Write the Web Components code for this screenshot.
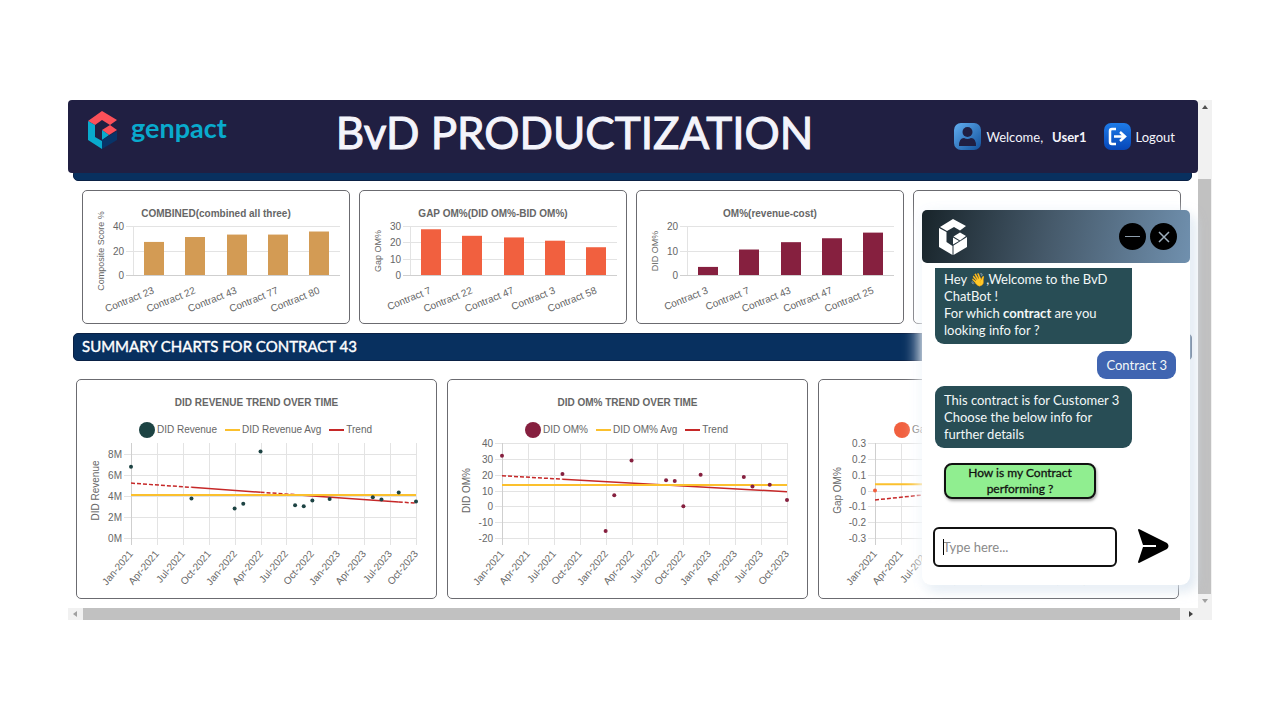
<!DOCTYPE html>
<html lang="en">
<head>
<meta charset="utf-8">
<meta name="viewport" content="width=device-width, initial-scale=1">
<title>BvD Productization</title>
<style>
  body { margin: 0; background: #fff; font-family: Lato, Calibri, sans-serif; color: #111; }
  bvd-dashboard { padding: 100px 68px; }
</style>
</head>
<body>
<bvd-dashboard></bvd-dashboard>
<script>
const define = (name, markup, init) => {
  const tpl = document.createElement('template');
  tpl.innerHTML = markup;
  customElements.define(name, class extends HTMLElement {
    constructor() {
      super();
      this.attachShadow({ mode: 'open' }).append(tpl.content.cloneNode(true));
    }
    connectedCallback() { if (init) init.call(this, this.shadowRoot); }
  });
};

const line = (x1, y1, x2, y2, extra) =>
  `<line x1="${x1}" y1="${y1}" x2="${x2}" y2="${y2}" ${extra}/>`;
const chartCss = `
  :host { display: block; border: 1px solid #6b6b70; border-radius: 5px; background: #fff;
    font-family: "Liberation Sans", Arial, sans-serif; font-size: 10px; color: #666; }
  h3 { margin: 0; padding-top: 17px; min-height: 11px; font-size: 10px; line-height: 11px; text-align: center; }
  svg { display: block; width: 100%; height: auto; overflow: visible; }
  text { fill: #666; font-size: 10px; }
  .small { font-size: 9px; }
  .grid { stroke: #e3e3e3; }
  .axis { stroke: #cfcfcf; }`;

define('bar-chart', `<style>${chartCss}</style>
  <h3><slot></slot></h3><div id="plot"></div>`, function (root) {
  const { axis, max, step, color, bars } = JSON.parse(this.getAttribute('data'));
  const L = 50, R = 257, T = 7, B = 56, pitch = (R - L) / bars.length;
  const y = v => B - v / max * (B - T);
  let s = '';
  for (let v = 0; v <= max; v += step) {
    const yy = Math.round(y(v)) + 0.5;
    s += line(L - 7, yy, R, yy, `class="${v ? 'grid' : 'axis'}"`) +
      `<text x="${L - 9}" y="${yy + 3}" text-anchor="end">${v}</text>`;
  }
  s += line(L + 0.5, T, L + 0.5, B, 'class="grid"');
  bars.forEach(([name, v], i) => {
    const cx = L + pitch * (i + 0.5);
    s += `<rect x="${Math.round(cx - 10)}" y="${y(v)}" width="20" height="${B - y(v)}" fill="${color}"/>` +
      `<text transform="translate(${cx + 1} 74) rotate(-22)" text-anchor="end">${name}</text>`;
  });
  s += `<text class="small" transform="translate(21 32) rotate(-90)" text-anchor="middle">${axis}</text>`;
  root.getElementById('plot').innerHTML = `<svg viewBox="0 0 266 104">${s}</svg>`;
});

define('trend-chart', `<style>${chartCss}
  .legend { display: flex; justify-content: center; gap: 8px; margin-top: 14px; padding-right: 2px; line-height: 16px; white-space: nowrap; }
  .legend.single { justify-content: flex-start; padding-left: 75px; }
  .legend span { display: flex; align-items: center; gap: 2px; font-size: 10px; }
  .dot { width: 16px; height: 16px; border-radius: 50%; }
  .bar { width: 15px; height: 2px; }
  </style>
  <h3><slot></slot></h3><div class="legend"></div><div id="plot"></div>`, function (root) {
  const d = JSON.parse(this.getAttribute('data'));
  const L = d.left, R = L + 285, T = 5, B = 100;
  const y = v => B - (v - d.min) / (d.max - d.min) * (B - T);
  const x = m => L + m / 33 * (R - L);
  const legend = root.querySelector('.legend');
  legend.classList.toggle('single', !!d.single);
  legend.innerHTML = `<span><i class="dot" style="background:${d.color}"></i>${d.series}</span>` +
    (d.single ? '' :
    `<span><i class="bar" style="background:#fbc02d"></i>${d.series} Avg</span>` +
    `<span><i class="bar" style="background:#c62828"></i>Trend</span>`);
  let s = '';
  d.ticks.forEach(([v, label]) => {
    const yy = Math.round(y(v)) + 0.5;
    s += line(L - 7, yy, R, yy, 'class="grid"') +
      `<text x="${L - 9}" y="${yy + 3}" text-anchor="end">${label}</text>`;
  });
  ['Jan-2021', 'Apr-2021', 'Jul-2021', 'Oct-2021', 'Jan-2022', 'Apr-2022', 'Jul-2022', 'Oct-2022',
   'Jan-2023', 'Apr-2023', 'Jul-2023', 'Oct-2023'].forEach((label, i) => {
    const xx = Math.round(x(i * 3)) + 0.5;
    s += line(xx, T, xx, B + 7, `class="${i ? 'grid' : 'axis'}"`) +
      `<text transform="translate(${xx + 2} 116) rotate(-50)" text-anchor="end">${label}</text>`;
  });
  const [a, b] = d.trend, t = m => y(a + (b - a) * m / 33);
  d.parts.forEach(([from, to, dashed]) => {
    s += line(x(from), t(from), x(to), t(to),
      `stroke="#c62828" stroke-width="1.5" ${dashed ? 'stroke-dasharray="4 2"' : ''}`);
  });
  s += line(L, y(d.avg), R, y(d.avg), 'stroke="#fbc02d" stroke-width="2"');
  d.points.forEach(([m, v]) => { s += `<circle cx="${x(m)}" cy="${y(v)}" r="2" fill="${d.color}"/>`; });
  s += `<text transform="translate(22 ${(T + B) / 2}) rotate(-90)" text-anchor="middle">${d.axis}</text>`;
  root.getElementById('plot').innerHTML = `<svg viewBox="0 0 359 160">${s}</svg>`;
});

define('app-header', `<style>
  :host { display: grid; grid-template-columns: auto 1fr auto; height: 73px; box-sizing: border-box; padding: 0 23px 0 19px;
    background: #201f42; color: #f4f4fb; border-radius: 4px; position: relative; z-index: 1; }
  .logo { display: flex; align-items: flex-start; gap: 12px; padding-top: 10px; }
  .name { color: #09aacd; font-size: 27px; line-height: 36px; font-weight: 700; }
  h1 { margin: 0; padding-right: 32px; text-align: center; font-size: 44px; line-height: 65px; font-weight: 400;
    white-space: nowrap; -webkit-text-stroke: 1px #f4f4fb; }
  nav { display: flex; justify-content: flex-end; align-items: center; font-size: 13px; white-space: nowrap; }
  nav svg { margin-right: 5px; }
  b { margin: 0 17px 0 9px; }
  a { display: flex; align-items: center; color: inherit; text-decoration: none; }
  </style>
  <div class="logo">
    <svg width="32" height="40" viewBox="0 0 32 40">
      <path d="M1 11 15 1 30 10 23 15 15 10 8 15Z" fill="#fb5059"/>
      <path d="M1 11 8 15V27L15 31V39L1 30Z" fill="#09aacd"/>
      <path d="M15 20 23 15 30 20 22 25Z" fill="#fb5059"/>
      <path d="M15 20 22 25 15 30Z" fill="#09aacd"/>
      <path d="M15 30 30 21V30L15 39Z" fill="#083468"/>
    </svg>
    <span class="name">genpact</span>
  </div>
  <h1>BvD PRODUCTIZATION</h1>
  <nav>
    <svg width="27" height="27" viewBox="0 0 27 27">
      <defs><linearGradient id="u" x2="1" y2="1"><stop stop-color="#62aef0"/><stop offset="1" stop-color="#12519c"/></linearGradient></defs>
      <rect width="27" height="27" rx="7" fill="url(#u)"/>
      <circle cx="13.500" cy="9" r="5" fill="#201f42"/><path d="M5 23q0-8 5-8 3.500 2 7 0 5 0 5 8z" fill="#201f42"/>
    </svg>
    <span>Welcome,</span><b>User1</b>
    <a href="#logout"><svg width="27" height="27" viewBox="0 0 27 27">
      <defs><linearGradient id="o" x2="0" y2="1"><stop stop-color="#1e7be8"/><stop offset="1" stop-color="#0646b8"/></linearGradient></defs>
      <rect width="27" height="27" rx="7" fill="url(#o)"/>
      <path d="M12 6H8Q6 6 6 8V19Q6 21 8 21H12M10 13.500H20M16 9l5 4.500L16 18" fill="none" stroke="#fff" stroke-width="2.500"/>
    </svg>Logout</a>
  </nav>`);

define('section-band', `<style>
  :host { display: block; margin: 0 6px 0 5px; background: #08305f; border: 1px solid #0a2145; border-radius: 5px;
    color: #fff; box-sizing: border-box; }
  h2 { margin: 0; padding: 0 0 2px 8px; font-size: 15px; line-height: 24px; font-weight: 400; -webkit-text-stroke: 0.4px #fff; }
  </style><h2><slot></slot></h2>`);

define('scroll-bar', `<style>
  :host { display: flex; background: #f1f1f1; }
  :host([vertical]) { flex-direction: column; }
  .gap { flex: none; }
  .thumb { flex: 1; background: #c1c1c1; }
  :host([vertical]) .thumb { margin-right: 1px; }
  :host([vertical]) .gap { height: 65px; }
  </style><slot name="start"></slot><div class="gap"></div><div class="thumb"></div><slot name="end"></slot>`);

define('chat-bubble', `<style>
  :host { display: block; box-sizing: border-box; width: 197px; padding: 6px 9px 5px; border-radius: 9px;
    background: #284d55; color: #f3f8f8; font-size: 13px; line-height: 17px; }
  :host([mine]) { width: auto; align-self: flex-end; background: #4065b1; }
  :host([clipped]) { padding-top: 3px; border-radius: 0 0 9px 9px; }
  </style><slot></slot>`);

define('chat-window', `<style>
  :host { display: block; box-sizing: border-box; background: #fff; border-radius: 9px; padding-bottom: 18px;
    box-shadow: -3px 0 16px #f7fafd, 5px 5px 12px rgb(190 208 226 / 0.6); }
  header { display: flex; align-items: center; gap: 4px; height: 53px; box-sizing: border-box; padding: 0 13px 0 16px;
    border-radius: 5px; background: linear-gradient(100deg, #18242a, #465a6b 48%, #7090ae); }
  header button { width: 27px; height: 27px; padding: 0; border: 0; border-radius: 50%; background: #000; display: grid; place-items: center; }
  header .mark { margin-right: auto; }
  .log { display: flex; flex-direction: column; align-items: flex-start; gap: 7px; padding: 5px 14px 0 13px; }
  .choice { margin: 8px 0 0 9px; width: 152px; height: 36px; padding: 0 16px; border: 2px solid #111; border-radius: 8px;
    background: #90ee90; color: #111; font: 400 12px/16px Lato, sans-serif; -webkit-text-stroke: 0.3px #111; box-shadow: 1px 2px 3px #aaa; }
  form { display: flex; align-items: center; gap: 20px; margin: 28px 0 0 11px; }
  .field { position: relative; }
  .caret { position: absolute; left: 10px; top: 12px; width: 1px; height: 16px; background: #000; }
  input { display: block; width: 184px; height: 40px; box-sizing: border-box; padding: 0 8px; border: 2px solid #111; border-radius: 6px;
    font: 400 13px Lato, sans-serif; outline: 0; }
  input::placeholder { color: #8a8a8a; }
  .send { padding: 0; border: 0; background: none; height: 36px; }
  </style>
  <header>
    <svg class="mark" width="30" height="38" viewBox="0 0 30 38" fill="#fff">
      <path d="M2 9 15 1 28 8 22 12.500 16 9 9 13Z"/><path d="M1 10 8.500 14V24L14.500 28V37L1 29Z"/>
      <path d="M15.500 18.500 22 14.500 28 18 22 22.500Z"/><path d="M15 19.500 21 23 15 26.500Z"/><path d="M15.500 27.500 29 19V29L15.500 37Z"/>
    </svg>
    <button aria-label="Minimize"><svg width="15" height="15" stroke="#8d9dab"><path d="M0 7.500H15"/></svg></button>
    <button aria-label="Close"><svg width="12" height="12" stroke="#9fb0be" stroke-width="1.500"><path d="M1 1 11 11M11 1 1 11"/></svg></button>
  </header>
  <div class="log">
    <chat-bubble clipped>Hey 👋,Welcome to the BvD ChatBot !<br>For which <b>contract</b><span> are you</span><br>looking info for ?</chat-bubble>
    <chat-bubble mine>Contract 3</chat-bubble>
    <chat-bubble>This contract is for Customer 3 Choose the below info for further details</chat-bubble>
    <button class="choice">How is my Contract performing ?</button>
  </div>
  <form>
    <div class="field"><input type="text" placeholder="Type here..." aria-label="Message"><span class="caret"></span></div>
    <button class="send" type="button" aria-label="Send"><svg width="32" height="34" viewBox="0 0 32 34">
      <path d="M1 1Q1 0 2 0L30 14Q33 17 30 20L2 34Q1 34 1 33L6 18H19V16H6Z" fill="#000"/></svg></button>
  </form>`);

const bar = (title, data) => `<bar-chart data='${JSON.stringify(data)}'>${title}</bar-chart>`;
const trend = (title, data) => `<trend-chart data='${JSON.stringify(data)}'>${title}</trend-chart>`;

define('bvd-dashboard', `<style>
  :host { display: block; }
  .frame { position: relative; display: grid; grid-template-columns: minmax(0, 1fr) 14px; grid-template-rows: auto 12px; }
  .strip { height: 12px; margin-top: -4px; }
  .bars { display: grid; grid-template-columns: repeat(4, minmax(0, 1fr)); gap: 9px; padding: 9px 17px 9px 14px; }
  .trends { display: grid; grid-template-columns: repeat(3, minmax(0, 1fr)); gap: 10px; padding: 18px 19px 9px 8px; }
  chat-window { position: absolute; top: 110px; right: 22px; width: 268px; z-index: 2; }
  .bottom { grid-column: 1 / -1; }
  .blank { border: 1px solid #6b6b70; border-radius: 5px; }
  svg { display: block; flex: none; }
  </style>
  <div class="frame">
    <main>
      <app-header></app-header>
      <section-band class="strip"></section-band>
      <div class="bars">
        ${bar('COMBINED(combined all three)', { axis: 'Composite Score %', max: 40, step: 20, color: '#d39b54',
          bars: [['Contract 23', 27], ['Contract 22', 31], ['Contract 43', 33], ['Contract 77', 33], ['Contract 80', 35.5]] })}
        ${bar('GAP OM%(DID OM%-BID OM%)', { axis: 'Gap OM%', max: 30, step: 10, color: '#f1603f',
          bars: [['Contract 7', 28], ['Contract 22', 24], ['Contract 47', 23], ['Contract 3', 21], ['Contract 58', 17]] })}
        ${bar('OM%(revenue-cost)', { axis: 'DID OM%', max: 20, step: 10, color: '#86203f',
          bars: [['Contract 3', 3.3], ['Contract 7', 10.4], ['Contract 43', 13.4], ['Contract 47', 15], ['Contract 25', 17.3]] })}
        <div class="blank"></div>
      </div>
      <section-band>SUMMARY CHARTS FOR CONTRACT 43</section-band>
      <div class="trends">
        ${trend('DID REVENUE TREND OVER TIME', { axis: 'DID Revenue', series: 'DID Revenue', color: '#1d4343', left: 54, min: 0, max: 9,
          ticks: [[0, '0M'], [2, '2M'], [4, '4M'], [6, '6M'], [8, '8M']], avg: 4.08, trend: [5.2, 3.3],
          parts: [[0, 7, 1], [7, 15, 0], [15, 19, 1], [19, 31, 0], [31, 33, 1]],
          points: [[0, 6.75], [7, 3.75], [12, 2.8], [13, 3.25], [15, 8.2], [19, 3.1], [20, 3], [21, 3.55], [23, 3.7], [28, 3.85], [29, 3.65], [31, 4.3], [33, 3.45]] })}
        ${trend('DID OM% TREND OVER TIME', { axis: 'DID OM%', series: 'DID OM%', color: '#86203f', left: 54, min: -20, max: 40,
          ticks: [-20, -10, 0, 10, 20, 30, 40].map(v => [v, v]), avg: 13.4, trend: [19.3, 9.2],
          parts: [[0, 7, 1], [7, 33, 0]],
          points: [[0, 32], [7, 20.5], [12, -15.5], [13, 7], [15, 29], [19, 16.5], [20, 16], [21, 0], [23, 20], [28, 18.5], [29, 12.5], [31, 13.7], [33, 4]] })}
        ${trend('', { axis: 'Gap OM%', series: 'Gap OM%', single: true, color: '#f1603f', left: 56, min: -0.3, max: 0.3,
          ticks: [-0.3, -0.2, -0.1, 0, 0.1, 0.2, 0.3].map(v => [v, v]), avg: 0.04, trend: [-0.06, 0.13],
          parts: [[0, 33, 1]], points: [[0, 0]] })}
      </div>
    </main>
    <scroll-bar vertical>
      <svg slot="start" width="14" height="14"><path d="M4 9 7 5 10 9Z" fill="#505050"/></svg>
      <svg slot="end" width="14" height="14"><path d="M4 5H10L7 9Z" fill="#a0a0a0"/></svg>
    </scroll-bar>
    <scroll-bar class="bottom">
      <svg slot="start" width="15" height="12"><path d="M9 3V9L5 6Z" fill="#a0a0a0"/></svg>
      <svg slot="end" width="32" height="12"><path d="M9 3V9L13 6Z" fill="#404040"/></svg>
    </scroll-bar>
    <chat-window></chat-window>
  </div>`);
</script>
</body>
</html>
